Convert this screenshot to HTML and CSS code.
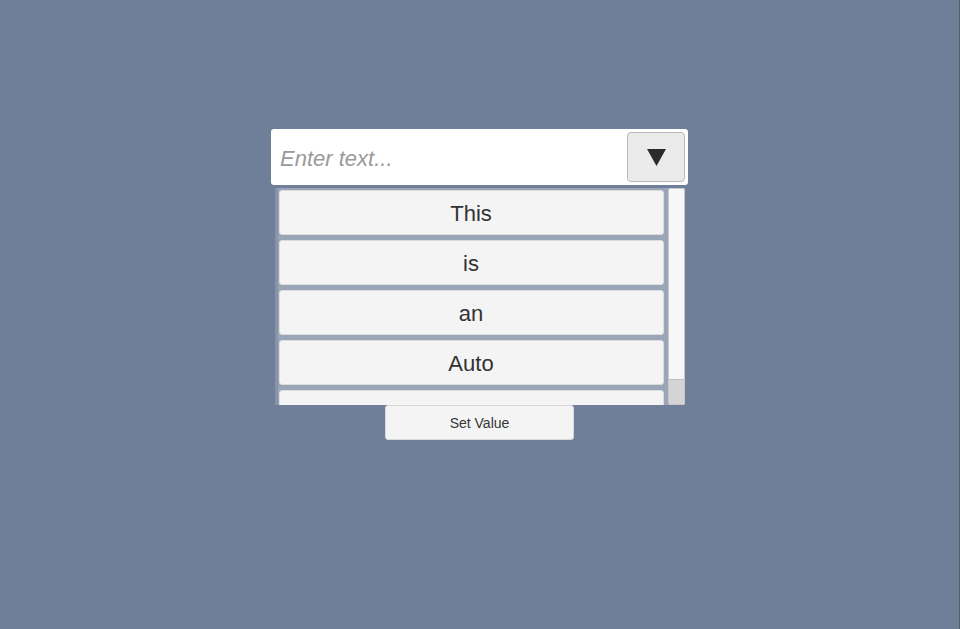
FILE: index.html
```html
<!DOCTYPE html>
<html>
<head>
<meta charset="utf-8">
<link rel="stylesheet" href="styles.css">
</head>
<body>
<div class="page">
  <div class="widget">
    <div class="input">
      <span class="placeholder">Enter text...</span>
      <div class="drop-btn"><svg class="tri" width="19" height="17" viewBox="0 0 19 17"><polygon points="0,0 19,0 9.5,17" fill="#2b2b2b"/></svg></div>
    </div>
    <div class="list">
      <div class="items">
        <div class="item">This</div>
        <div class="item">is</div>
        <div class="item">an</div>
        <div class="item">Auto</div>
        <div class="item">Completion</div>
      </div>
      <div class="scrollbar"><div class="handle"></div></div>
    </div>
    <div class="set-btn">Set Value</div>
  </div>
</div>
</body>
</html>
```
FILE: styles.css
```css
html, body {
  margin: 0;
  padding: 0;
}
body {
  background: #6f7f99;
  font-family: "Liberation Sans", Arial, sans-serif;
}
.page {
  width: 959px;
  height: 629px;
  border-right: 1px solid #5a5f68;
  overflow: hidden;
}
.widget {
  display: flex;
  flex-direction: column;
  align-items: center;
  padding-top: 129px;
}
.input {
  width: 417px;
  height: 56px;
  box-sizing: border-box;
  background: #ffffff;
  border-radius: 3px;
  display: flex;
  align-items: center;
  justify-content: space-between;
  padding: 0 3px 0 9px;
}
.placeholder {
  font-style: italic;
  font-size: 22px;
  color: #9a9a9a;
  padding-top: 3px;
}
.drop-btn {
  width: 58px;
  height: 50px;
  box-sizing: border-box;
  background: #ebebeb;
  border: 1px solid #b9b9b9;
  border-radius: 4px;
  display: flex;
  align-items: center;
  justify-content: center;
}
.tri {
  display: block;
  margin-top: 1px;
}
.list {
  width: 410px;
  height: 217px;
  margin-top: 3px;
  display: flex;
  gap: 4px;
  background: #9aa5b7;
  border-left: 3px solid #8793a8;
  box-sizing: border-box;
  overflow: hidden;
}
.items {
  flex: 1;
  display: flex;
  flex-direction: column;
  gap: 5px;
  padding: 2px 0 0 1px;
}
.item {
  flex: none;
  height: 45px;
  box-sizing: border-box;
  background: #f4f4f4;
  border: 1px solid #dcdcdc;
  border-radius: 3px;
  display: flex;
  align-items: center;
  justify-content: center;
  font-size: 22px;
  color: #323232;
  padding-top: 2px;
}
.scrollbar {
  width: 17px;
  flex: none;
  box-sizing: border-box;
  background: #f7f7f7;
  border: 1px solid #c8c8c8;
  border-radius: 2px;
  display: flex;
  flex-direction: column;
  justify-content: flex-end;
}
.handle {
  height: 24px;
  background: #d4d4d4;
  border-top: 1px solid #bdbdbd;
}
.set-btn {
  width: 189px;
  height: 35px;
  box-sizing: border-box;
  background: #f4f4f4;
  border: 1px solid #d8d8d8;
  border-radius: 3px;
  display: flex;
  align-items: center;
  justify-content: center;
  font-size: 14px;
  color: #353535;
}
```
